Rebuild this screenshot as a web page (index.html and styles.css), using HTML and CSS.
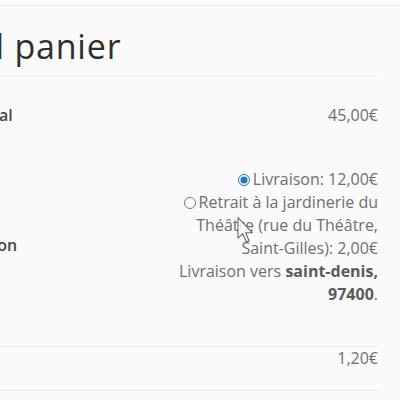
FILE: index.html
```html
<!DOCTYPE html>
<html lang="fr">
<head>
<meta charset="utf-8">
<title>Total panier</title>
<link rel="stylesheet" href="styles.css">
</head>
<body>
<div class="topbar"></div>
<div class="cart-totals">
  <h2 class="title">Total panier</h2>
  <div class="totals">
    <div class="row row-subtotal">
      <div class="label">Sous-total</div>
      <div class="value">45,00€</div>
    </div>
    <div class="row row-shipping">
      <div class="label">Expédition</div>
      <div class="value">
        <ul class="methods">
          <li><input type="radio" name="ship" class="radio" checked><label>Livraison: 12,00€</label></li>
          <li><input type="radio" name="ship" class="radio"><label>Retrait à la jardinerie du Théâtre (rue du Théâtre, Saint-Gilles): 2,00€</label></li>
        </ul>
        <p class="dest">Livraison vers <strong>saint-denis, 97400</strong>.</p>
      </div>
    </div>
    <div class="row row-tax">
      <div class="label">TVA</div>
      <div class="value">1,20€</div>
    </div>
  </div>
</div>
<svg class="cursor" width="17" height="26" viewBox="0 0 12 19" aria-hidden="true">
  <path d="M0.5 0.5 L0.5 15.5 L4 12.2 L6.6 18.2 L8.6 17.3 L6.1 11.5 L11 11.5 Z" fill="#fff" fill-opacity="0.85" stroke="#666" stroke-width="0.8" stroke-linejoin="round"/>
</svg>
</body>
</html>
```
FILE: styles.css
```css
html, body {
  margin: 0;
  padding: 0;
  background: #fafafa;
  overflow: hidden;
  width: 400px;
  height: 400px;
}
body {
  font-family: "Open Sans", "Noto Sans", sans-serif;
  font-size: 16px;
  line-height: 23px;
  color: #6f6f6f;
  position: relative;
}
.topbar {
  height: 5px;
  border-bottom: 1px solid #e9e9e9;
}
.cart-totals {
  margin-left: -65px;
  width: 443px;
}
.title {
  margin: 21px 0 9px;
  font-size: 34px;
  line-height: 39px;
  font-weight: 400;
  color: #2e2e2e;
  letter-spacing: 0.8px;
  text-indent: -13px;
}
.totals {
  border-top: 1px solid #efedf1;
}
.row {
  display: flex;
  justify-content: space-between;
}
.label {
  font-weight: 600;
  color: #474747;
}
.value {
  text-align: right;
}
.row-subtotal {
  padding: 28px 0 17px;
}
.row-shipping {
  align-items: center;
  border-bottom: 1px solid #ececec;
}
.row-shipping .value {
  width: 212px;
  padding: 24px 0 40px;
}
.methods {
  list-style: none;
  margin: 0;
  padding: 0;
}
.methods li {
  margin: 0;
}
.radio {
  width: 12px;
  height: 12px;
  margin: 0 3px 0 0;
  vertical-align: -1px;
  accent-color: #1f78d1;
}
.dest {
  margin: 0;
}
.dest strong {
  font-weight: 700;
  color: #5a5a5a;
}
.row-tax {
  height: 43px;
  border-bottom: 1px solid #ececec;
}
.row-tax .label {
  visibility: hidden;
}
.cursor {
  position: absolute;
  left: 237px;
  top: 217px;
}
```
